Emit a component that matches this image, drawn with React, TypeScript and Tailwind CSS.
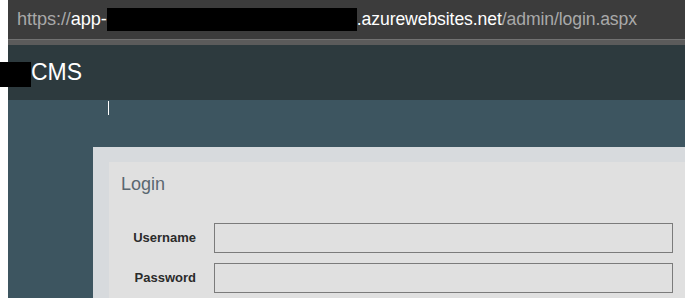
const font = "font-['Liberation_Sans',Arial,sans-serif]";

const Field = ({ label }: { label: string }) => (
  <>
    <label className="self-center text-right text-[13px] font-bold text-[#2b2b2b]">
      {label}
    </label>
    <div className="h-[30px] border border-[#7b7b7b] bg-[#e0e0e0]" />
  </>
);

export default function App() {
  return (
    <div className={`flex h-[298px] w-[685px] flex-col overflow-hidden bg-white pl-[8px] ${font}`}>
      {/* browser address bar */}
      <div className="flex h-[39px] shrink-0 items-center bg-[#3c3c3c] pl-[9px] text-[17.6px] tracking-[-0.1px]">
        <span className="text-[18.2px] text-[#a9a9a9]">https://</span>
        <span className="text-[18.2px] text-white">app-</span>
        <span className="h-[23px] w-[250px] bg-black" />
        <span className="text-white">.azurewebsites.net</span>
        <span className="text-[#a9a9a9]">/admin/login.aspx</span>
      </div>
      <div className="h-px shrink-0 bg-[#717171]" />
      <div className="h-[5px] shrink-0 bg-[#5b5b5b]" />

      {/* site header */}
      <div className="flex h-[55px] shrink-0 items-start bg-[#2d3a3e]">
        <div className="-ml-[8px] mt-[17px] h-[25px] w-[31px] bg-black" />
        <span className="mt-[16px] text-[23px] leading-[23px] text-white">CMS</span>
      </div>

      {/* content */}
      <div className="flex flex-1 flex-col bg-[#3d5560]">
        <div className="ml-[100px] mt-[1px] h-[14px] w-px bg-white" />
        <div className="ml-[85px] mt-[32px] flex-1 bg-[#d7dadd] pl-[16px] pt-[15px]">
          <div className="h-full bg-[#e0e0e0] pl-[12px] pt-[12px]">
            <h1 className="text-[18px] leading-[21px] text-[#5a6770]">Login</h1>
            <div className="-ml-[12px] mt-[28px] grid grid-cols-[87px_459px] gap-x-[18px] gap-y-[10px]">
              <Field label="Username" />
              <Field label="Password" />
            </div>
          </div>
        </div>
      </div>
    </div>
  );
}
